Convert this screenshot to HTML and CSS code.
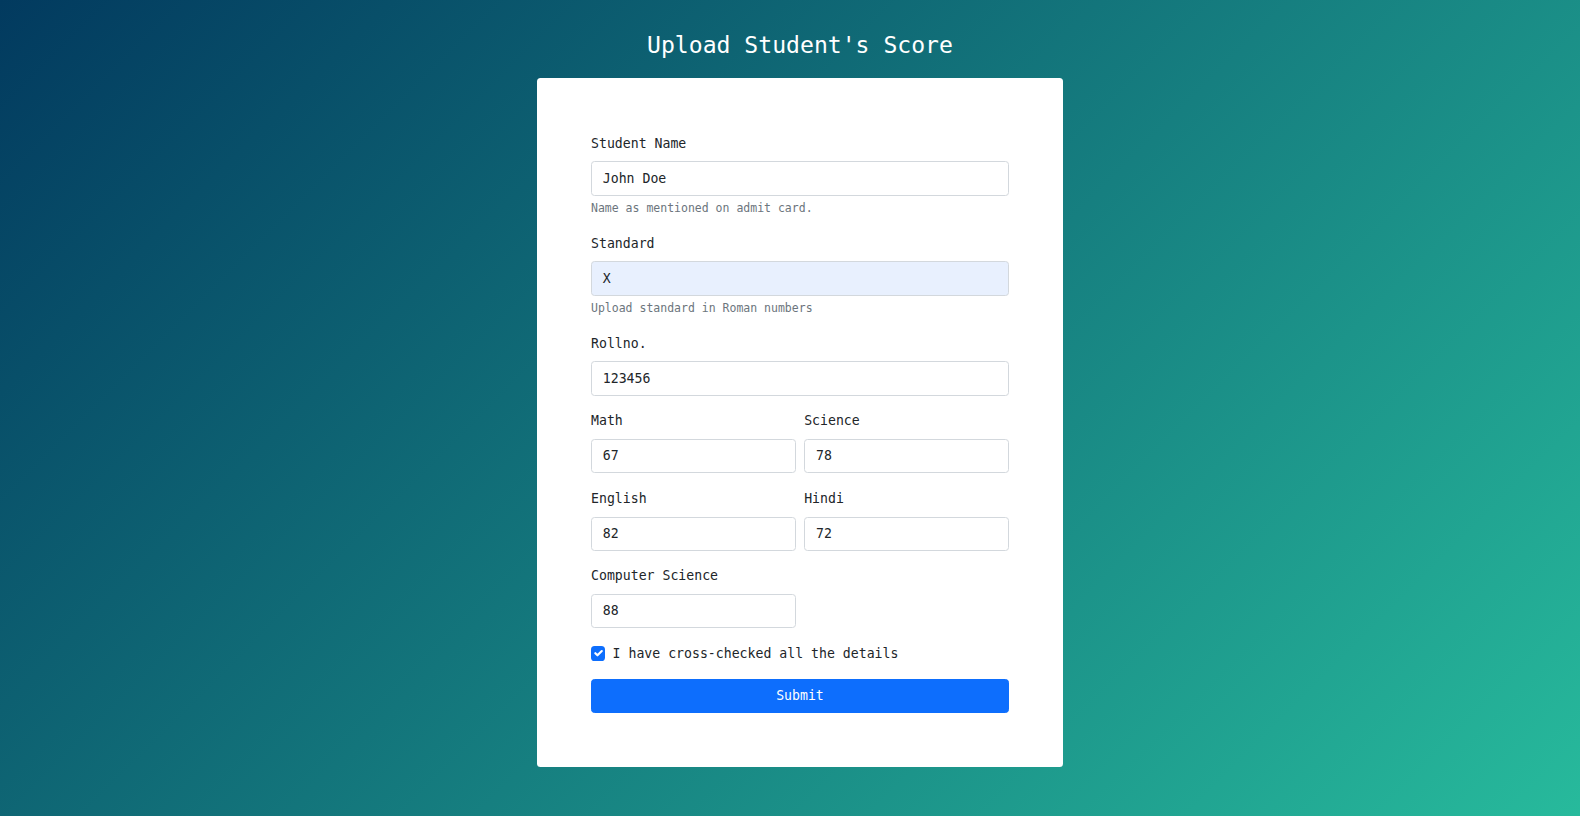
FILE: index.html
```html
<!DOCTYPE html>
<html lang="en">
<head>
<meta charset="utf-8">
<title>Upload Student's Score</title>
<link rel="stylesheet" href="styles.css">
</head>
<body>
<main class="page">
  <h1 class="title">Upload Student's Score</h1>
  <form class="card">
    <div class="group">
      <label class="label">Student Name</label>
      <div class="input">John Doe</div>
      <div class="help">Name as mentioned on admit card.</div>
    </div>
    <div class="group">
      <label class="label">Standard</label>
      <div class="input autofill">X</div>
      <div class="help">Upload standard in Roman numbers</div>
    </div>
    <div class="group">
      <label class="label">Rollno.</label>
      <div class="input">123456</div>
    </div>
    <div class="row">
      <div class="group">
        <label class="label">Math</label>
        <div class="input">67</div>
      </div>
      <div class="group">
        <label class="label">Science</label>
        <div class="input">78</div>
      </div>
    </div>
    <div class="row">
      <div class="group">
        <label class="label">English</label>
        <div class="input">82</div>
      </div>
      <div class="group">
        <label class="label">Hindi</label>
        <div class="input">72</div>
      </div>
    </div>
    <div class="row">
      <div class="group">
        <label class="label">Computer Science</label>
        <div class="input">88</div>
      </div>
    </div>
    <div class="check">
      <span class="check-box"><svg viewBox="0 0 20 20" width="14" height="14"><path d="M6 10l3 3l6-6" fill="none" stroke="#fff" stroke-width="3" stroke-linecap="round" stroke-linejoin="round"/></svg></span>
      <span class="check-label">I have cross-checked all the details</span>
    </div>
    <button type="button" class="btn">Submit</button>
  </form>
</main>
</body>
</html>
```
FILE: styles.css
```css
* { box-sizing: border-box; }
html, body { margin: 0; padding: 0; }
body {
  min-height: 100vh;
  background: linear-gradient(135deg, #023a5f 0%, #27ba9c 100%);
  font-family: "DejaVu Sans Mono", "Liberation Mono", monospace;
  font-size: 13.2px;
  line-height: 21.6px;
  color: #212529;
}
.page {
  display: flex;
  flex-direction: column;
  align-items: center;
  padding-top: 32px;
  padding-left: 20px;
  padding-bottom: 40px;
}
.title {
  margin: 0 0 17.8px;
  font-size: 23.1px;
  line-height: 27.7px;
  font-weight: normal;
  color: #fff;
}
.card {
  width: 526px;
  background: #fff;
  border-radius: 3.5px;
  padding: 55px 54px 54px;
  display: flex;
  flex-direction: column;
}
.group {
  display: flex;
  flex-direction: column;
  margin-bottom: 14.4px;
}
.label {
  margin-bottom: 7.2px;
  line-height: 21.6px;
}
.input {
  height: 34.4px;
  padding: 5.4px 10.8px;
  border: 1px solid #d3d8dd;
  border-radius: 3.5px;
  background: #fff;
  line-height: 21.6px;
  color: #212529;
}
.input.autofill {
  background: #e8f0fe;
}
.help {
  margin-top: 3.6px;
  font-size: 11.5px;
  line-height: 18.9px;
  color: #6c757d;
}
.row {
  display: grid;
  grid-template-columns: 1fr 1fr;
  column-gap: 8.3px;
}
.check {
  display: flex;
  align-items: flex-start;
  min-height: 21.6px;
  margin-bottom: 14.4px;
}
.check-box {
  width: 14.4px;
  height: 14.4px;
  margin-top: 3.6px;
  margin-right: 7.2px;
  border-radius: 3.6px;
  background: #0d6efd;
  display: flex;
  align-items: center;
  justify-content: center;
}
.check-box svg { display: block; width: 14.4px; height: 14.4px; }
.check-label {
  line-height: 21.6px;
}
.btn {
  height: 34.4px;
  width: 100%;
  border: 1px solid #0d6efd;
  border-radius: 3.5px;
  background: #0d6efd;
  color: #fff;
  font-family: inherit;
  font-size: 13.2px;
  line-height: 21.6px;
  padding: 5.4px 10.8px;
}
```
